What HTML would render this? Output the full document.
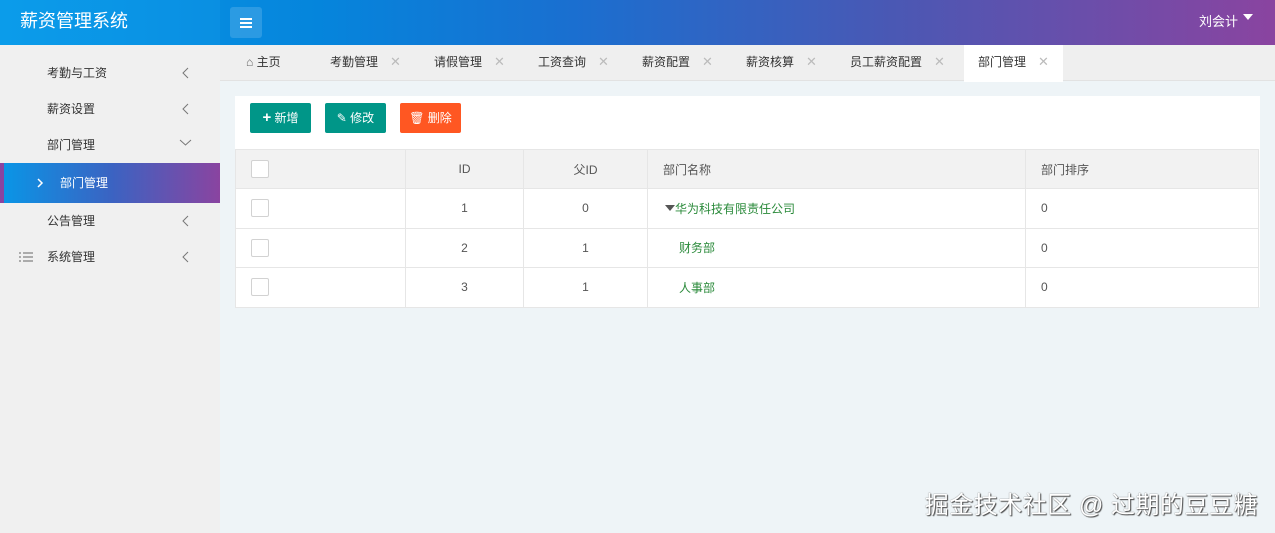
<!DOCTYPE html>
<html><head><meta charset="utf-8"><style>
*{margin:0;padding:0;box-sizing:border-box}
body{width:1275px;height:533px;overflow:hidden;font-family:"Liberation Sans","Noto Sans CJK SC",sans-serif;font-size:12px;color:#333;background:#eef4f7;position:relative}
.hd{position:absolute;left:0;top:0;width:1275px;height:45px;background:linear-gradient(90deg,#0a98e6 0%,#0585dc 25%,#1a6fd0 45%,#4a58b4 70%,#8a44a0 100%)}
.logo{position:absolute;left:0;top:0;width:220px;height:45px;background:linear-gradient(90deg,#0b9cea,#0a8fe2);color:#fff;font-size:18px;line-height:43px;padding-left:20px}
.menu{position:absolute;left:230px;top:7px;width:32px;height:31px;background:rgba(255,255,255,.15);border-radius:3px}
.menu i{position:absolute;left:10px;width:12px;height:1.5px;background:#fff}
.user{position:absolute;right:22px;top:0;line-height:43px;color:#fff;font-size:13px}
.tri{display:inline-block;border:5px solid transparent;border-top:6px solid #fff;margin-left:5px;vertical-align:1px}
.sb{position:absolute;left:0;top:45px;width:220px;height:488px;background:#f0f0f0}
.it{position:absolute;left:0;width:220px;height:36px;line-height:36px;padding-left:47px;font-size:12px;color:#333}
.ar{position:absolute;right:30px;top:12px}
.act{background:linear-gradient(90deg,#0a95e6,#3b63c2 50%,#8a44a0);color:#fff;border-left:4px solid #8a44a0;height:40px;line-height:40px;padding-left:56px}
.tabs{position:absolute;left:220px;top:45px;width:1055px;height:36px;background:#efefef;border-bottom:1px solid #e2e2e2}
.tab{position:absolute;top:0;height:36px;line-height:34px;font-size:12px;color:#333}
.tab b{font-weight:normal;color:#bbb;margin-left:12px;font-size:13px}
.on{background:#fff;height:37px;padding:0 14px}
.panel{position:absolute;left:235px;top:96px;width:1025px;height:211px;background:#fff}
.btn{position:absolute;top:7px;height:30px;line-height:30px;color:#fff;font-size:12px;text-align:center;border-radius:2px}
table{position:absolute;left:0;top:53px;width:1024px;border-collapse:collapse}
td{border:1px solid #e6e6e6;height:39.5px;text-align:center;color:#555;font-size:12px}
tr.h td{background:#f2f2f2;height:39px}
.cb{display:inline-block;width:18px;height:18px;border:1px solid #d2d2d2;background:#fff;border-radius:2px;vertical-align:middle}
.l{text-align:left;padding-left:15px}
.g{color:#2a8a3a}
.wm{position:absolute;right:17px;top:485px;font-size:24px;color:#fff;text-shadow:0 0 1px #555,1px 1px 1px #444;letter-spacing:0.5px}
</style></head><body>
<div class="hd"><div class="logo">薪资管理系统</div>
<div class="menu"><i style="top:11px"></i><i style="top:15px"></i><i style="top:19px"></i></div>
<div class="user">刘会计<span class="tri"></span></div></div>
<div class="sb">
<div class="it" style="top:10px">考勤与工资<svg class="ar" width="8" height="12"><path d="M6 1L1 6L6 11" stroke="#777" fill="none"/></svg></div>
<div class="it" style="top:46px">薪资设置<svg class="ar" width="8" height="12"><path d="M6 1L1 6L6 11" stroke="#777" fill="none"/></svg></div>
<div class="it" style="top:82px">部门管理<svg class="ar" style="right:28px;top:12px" width="13" height="8"><path d="M1 1L6.5 6L12 1" stroke="#777" fill="none"/></svg></div>
<div class="it act" style="top:118px"><svg style="position:absolute;left:33px;top:15px" width="7" height="10"><path d="M1 1L5 5L1 9" stroke="#fff" stroke-width="1.5" fill="none"/></svg>部门管理</div>
<div class="it" style="top:158px">公告管理<svg class="ar" width="8" height="12"><path d="M6 1L1 6L6 11" stroke="#777" fill="none"/></svg></div>
<div class="it" style="top:194px"><svg style="position:absolute;left:19px;top:13px" width="14" height="10"><path d="M0 1h2M0 5h2M0 9h2M4 1h10M4 5h10M4 9h10" stroke="#666"/></svg>系统管理<svg class="ar" width="8" height="12"><path d="M6 1L1 6L6 11" stroke="#777" fill="none"/></svg></div>
</div>
<div class="tabs">
<div class="tab" style="left:26px"><span style="color:#666">⌂</span> 主页</div>
<div class="tab" style="left:110px">考勤管理<b>✕</b></div>
<div class="tab" style="left:214px">请假管理<b>✕</b></div>
<div class="tab" style="left:318px">工资查询<b>✕</b></div>
<div class="tab" style="left:422px">薪资配置<b>✕</b></div>
<div class="tab" style="left:526px">薪资核算<b>✕</b></div>
<div class="tab" style="left:630px">员工薪资配置<b>✕</b></div>
<div class="tab on" style="left:744px">部门管理<b>✕</b></div>
</div>
<div class="panel">
<div class="btn" style="left:15px;width:61px;background:#009688"><b style="font-size:15px">+</b> 新增</div>
<div class="btn" style="left:90px;width:61px;background:#009688">✎ 修改</div>
<div class="btn" style="left:165px;width:61px;background:#ff5722">🗑 删除</div>
<table>
<tr class="h"><td style="width:170px;text-align:left;padding-left:15px"><span class="cb"></span></td><td style="width:118px">ID</td><td style="width:124px">父ID</td><td class="l" style="width:378px">部门名称</td><td class="l">部门排序</td></tr>
<tr><td style="text-align:left;padding-left:15px"><span class="cb"></span></td><td>1</td><td>0</td><td class="l g" style="padding-left:17px"><svg width="10" height="8" style="vertical-align:1px"><path d="M0 1H10L5 7Z" fill="#555"/></svg>华为科技有限责任公司</td><td class="l">0</td></tr>
<tr><td style="text-align:left;padding-left:15px"><span class="cb"></span></td><td>2</td><td>1</td><td class="l g" style="padding-left:31px">财务部</td><td class="l">0</td></tr>
<tr><td style="text-align:left;padding-left:15px"><span class="cb"></span></td><td>3</td><td>1</td><td class="l g" style="padding-left:31px">人事部</td><td class="l">0</td></tr>
</table></div>
<div class="wm">掘金技术社区 @ 过期的豆豆糖</div>
</body></html>
